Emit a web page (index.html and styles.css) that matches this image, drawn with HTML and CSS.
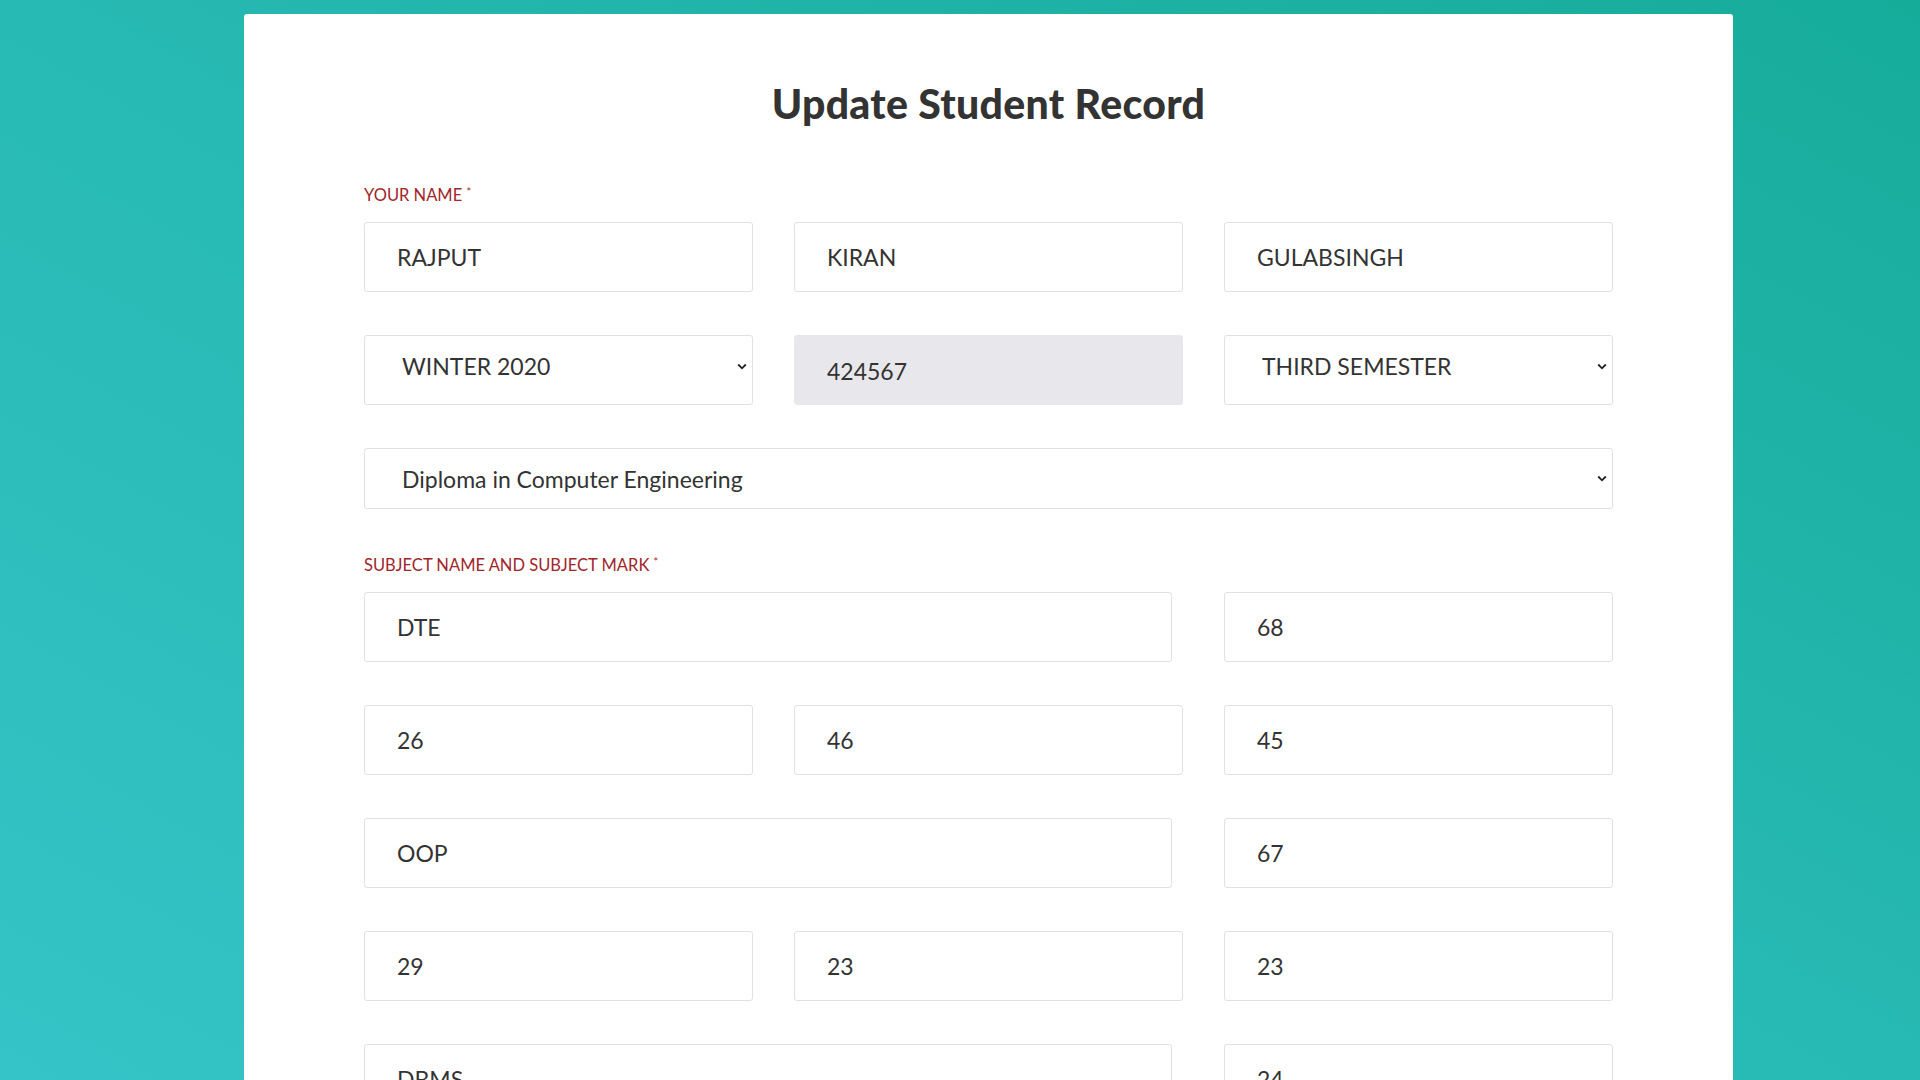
FILE: index.html
```html
<!DOCTYPE html>
<html lang="en">
<head>
<meta charset="utf-8">
<title>Update Student Record</title>
<link rel="stylesheet" href="styles.css">
</head>
<body>
<div class="card">
  <h1 class="title">Update Student Record</h1>
  <form class="form">
    <div class="label">Your Name <span class="req">*</span></div>
    <div class="row three">
      <input class="field" type="text" value="RAJPUT">
      <input class="field" type="text" value="KIRAN">
      <input class="field" type="text" value="GULABSINGH">
    </div>
    <div class="row three">
      <div class="select-wrap">
        <select class="field select"><option>WINTER 2020</option></select>
        <svg class="chev" width="10" height="7" viewBox="0 0 10 7"><path d="M1.2 1.5l3.8 3.8 3.8-3.8" fill="none" stroke="#222" stroke-width="1.8"/></svg>
      </div>
      <input class="field disabled" type="text" value="424567" disabled>
      <div class="select-wrap">
        <select class="field select"><option>THIRD SEMESTER</option></select>
        <svg class="chev" width="10" height="7" viewBox="0 0 10 7"><path d="M1.2 1.5l3.8 3.8 3.8-3.8" fill="none" stroke="#222" stroke-width="1.8"/></svg>
      </div>
    </div>
    <div class="row one">
      <div class="select-wrap">
        <select class="field select wide"><option>Diploma in Computer Engineering</option></select>
        <svg class="chev mid" width="10" height="7" viewBox="0 0 10 7"><path d="M1.2 1.5l3.8 3.8 3.8-3.8" fill="none" stroke="#222" stroke-width="1.8"/></svg>
      </div>
    </div>
    <div class="label second">Subject Name and Subject Mark <span class="req">*</span></div>
    <div class="row subj">
      <input class="field" type="text" value="DTE">
      <input class="field" type="text" value="68">
    </div>
    <div class="row three">
      <input class="field" type="text" value="26">
      <input class="field" type="text" value="46">
      <input class="field" type="text" value="45">
    </div>
    <div class="row subj">
      <input class="field" type="text" value="OOP">
      <input class="field" type="text" value="67">
    </div>
    <div class="row three">
      <input class="field" type="text" value="29">
      <input class="field" type="text" value="23">
      <input class="field" type="text" value="23">
    </div>
    <div class="row subj">
      <input class="field" type="text" value="DBMS">
      <input class="field" type="text" value="24">
    </div>
    <div class="row three">
      <input class="field" type="text" value="25">
      <input class="field" type="text" value="22">
      <input class="field" type="text" value="21">
    </div>
    <div class="row subj">
      <input class="field" type="text" value="CGR">
      <input class="field" type="text" value="58">
    </div>
    <div class="row three">
      <input class="field" type="text" value="24">
      <input class="field" type="text" value="20">
      <input class="field" type="text" value="22">
    </div>
    <div class="actions">
      <button class="submit" type="button">UPDATE</button>
    </div>
  </form>
</div>
</body>
</html>
```
FILE: styles.css
```css
html, body {
  margin: 0;
  padding: 0;
}
html::-webkit-scrollbar {
  width: 21px;
  background: #f1f1f1;
}
html::-webkit-scrollbar-thumb {
  background: #c1c1c1;
  border: 3px solid #f1f1f1;
}
body {
  background: linear-gradient(to top right, #35c4c7 0%, #27b9b3 50%, #16ac9a 100%);
  background-attachment: fixed;
  font-family: Lato, "Open Sans", "Liberation Sans", sans-serif;
  color: #333;
  padding-top: 14px;
  padding-bottom: 40px;
}
.card {
  margin-left: 244px;
  width: 1489px;
  box-sizing: border-box;
  background: #fff;
  border-radius: 3px;
  padding: 66px 120px 80px;
}
.title {
  margin: 0;
  text-align: center;
  font-size: 41px;
  line-height: 48px;
  font-weight: 900;
  color: #333;
  letter-spacing: 0.3px;
}
.form {
  display: flex;
  flex-direction: column;
  margin-top: 54px;
}
.label {
  font-size: 16.5px;
  line-height: 20px;
  text-transform: uppercase;
  color: #a1262a;
  margin-bottom: 17px;
}
.label .req {
  font-size: 11px;
  vertical-align: 5px;
}
.label.second {
  margin-top: 43px;
  margin-bottom: 17px;
}
.row {
  display: flex;
  justify-content: space-between;
  margin-bottom: 43px;
}
.row.one {
  margin-bottom: 0;
}
.row.three > * {
  width: 389px;
}
.row.subj > .field:first-child {
  width: 808px;
}
.row.subj > .field:last-child {
  width: 389px;
}
.row.one > * {
  width: 100%;
}
.field {
  box-sizing: border-box;
  height: 70px;
  border: 1px solid #e1e1e1;
  border-radius: 3px;
  background: #fff;
  font-family: Lato, "Open Sans", "Liberation Sans", sans-serif;
  font-size: 23px;
  color: #333;
  padding: 0 0 0 32px;
  outline: none;
  margin: 0;
}
.field.disabled {
  background: #e8e7ec;
  border-color: #e8e7ec;
  color: #333;
  -webkit-text-fill-color: #333;
  opacity: 1;
  padding-top: 2px;
}
.select-wrap {
  position: relative;
}
.select {
  -webkit-appearance: none;
  appearance: none;
  width: 100%;
  padding: 0 0 8px 37px;
  cursor: pointer;
}
.select.wide {
  height: 61px;
  padding-bottom: 0;
}
.chev {
  position: absolute;
  right: 6px;
  top: 28px;
  pointer-events: none;
}
.chev.mid {
  top: 27px;
}
.actions {
  display: flex;
  justify-content: center;
  margin-top: 10px;
}
.submit {
  font-family: Lato, "Open Sans", "Liberation Sans", sans-serif;
  font-size: 18px;
  font-weight: 700;
  letter-spacing: 1px;
  color: #fff;
  background: #1fb5a6;
  border: none;
  border-radius: 3px;
  padding: 18px 60px;
}
```
